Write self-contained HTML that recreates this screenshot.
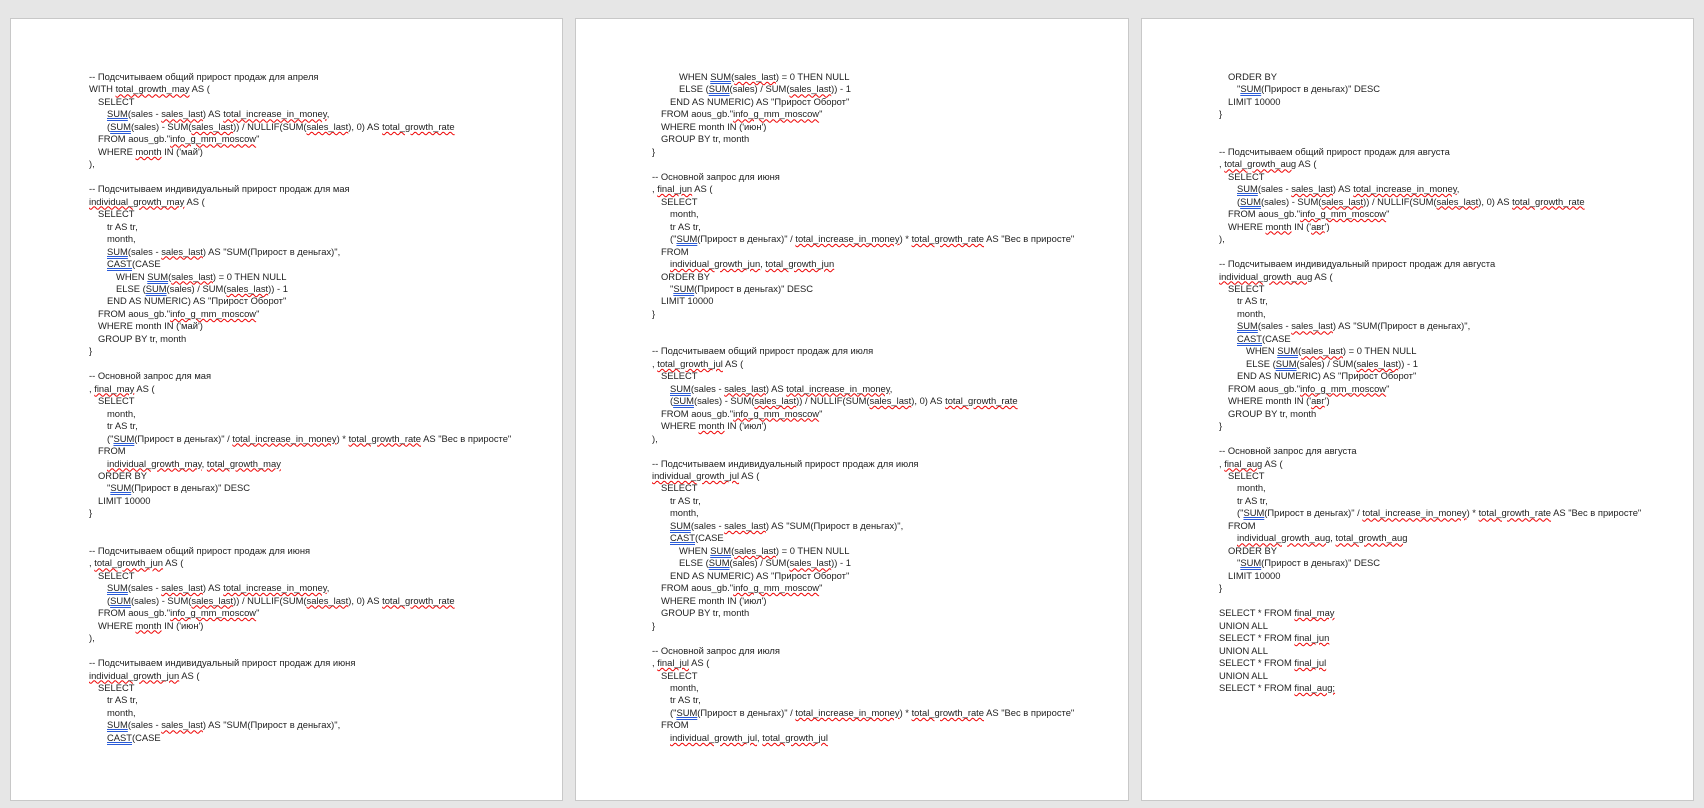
<!DOCTYPE html>
<html><head><meta charset="utf-8"><style>
html,body{margin:0;padding:0;}
body{width:1704px;height:808px;background:#e6e6e6;position:relative;overflow:hidden;font-family:"Liberation Sans","Noto Sans CJK SC",sans-serif;}
.pg{position:absolute;top:18px;height:783px;background:#fff;border:1px solid #c8c8c8;box-sizing:border-box;}
.tx{position:absolute;top:71px;font-size:9.4px;line-height:12.47px;color:#222;white-space:normal;}
.tx div{height:12.47px;white-space:pre;}
.i1{padding-left:9px}.i2{padding-left:18px}.i3{padding-left:27px}
.w{text-decoration:underline wavy #e00;text-decoration-thickness:1px;text-underline-offset:1px}
.b{text-decoration:underline double #2a5bd7;text-underline-offset:1px}
</style></head><body>
<div class="pg" style="left:10px;width:553px"></div>
<div class="pg" style="left:575px;width:554px"></div>
<div class="pg" style="left:1141px;width:553px"></div>

<div class="tx" style="left:89px">
<div>-- Подсчитываем общий прирост продаж для апреля</div>
<div>WITH <span class="w">total_growth_may</span> AS (</div>
<div class="i1">SELECT</div>
<div class="i2"><span class="b">SUM</span>(sales - <span class="w">sales_last</span>) AS <span class="w">total_increase_in_money</span>,</div>
<div class="i2">(<span class="b">SUM</span>(sales) - SUM(<span class="w">sales_last</span>)) / NULLIF(SUM(<span class="w">sales_last</span>), 0) AS <span class="w">total_growth_rate</span></div>
<div class="i1">FROM aous_gb."<span class="w">info_g_mm_moscow</span>"</div>
<div class="i1">WHERE <span class="w">month</span> IN ('май')</div>
<div>),</div>
<div></div>
<div>-- Подсчитываем индивидуальный прирост продаж для мая</div>
<div><span class="w">individual_growth_may</span> AS (</div>
<div class="i1">SELECT</div>
<div class="i2">tr AS tr,</div>
<div class="i2">month,</div>
<div class="i2"><span class="b">SUM</span>(sales - <span class="w">sales_last</span>) AS "SUM(Прирост в деньгах)",</div>
<div class="i2"><span class="b">CAST</span>(CASE</div>
<div class="i3">WHEN <span class="b">SUM</span>(<span class="w">sales_last</span>) = 0 THEN NULL</div>
<div class="i3">ELSE (<span class="b">SUM</span>(sales) / SUM(<span class="w">sales_last</span>)) - 1</div>
<div class="i2">END AS NUMERIC) AS "Прирост Оборот"</div>
<div class="i1">FROM aous_gb."<span class="w">info_g_mm_moscow</span>"</div>
<div class="i1">WHERE month IN ('май')</div>
<div class="i1">GROUP BY tr, month</div>
<div>}</div>
<div></div>
<div>-- Основной запрос для мая</div>
<div>, <span class="w">final_may</span> AS (</div>
<div class="i1">SELECT</div>
<div class="i2">month,</div>
<div class="i2">tr AS tr,</div>
<div class="i2">("<span class="b">SUM</span>(Прирост в деньгах)" / <span class="w">total_increase_in_money</span>) * <span class="w">total_growth_rate</span> AS "Вес в приросте"</div>
<div class="i1">FROM</div>
<div class="i2"><span class="w">individual_growth_may</span>, <span class="w">total_growth_may</span></div>
<div class="i1">ORDER BY</div>
<div class="i2">"<span class="b">SUM</span>(Прирост в деньгах)" DESC</div>
<div class="i1">LIMIT 10000</div>
<div>}</div>
<div></div>
<div></div>
<div>-- Подсчитываем общий прирост продаж для июня</div>
<div>, <span class="w">total_growth_jun</span> AS (</div>
<div class="i1">SELECT</div>
<div class="i2"><span class="b">SUM</span>(sales - <span class="w">sales_last</span>) AS <span class="w">total_increase_in_money</span>,</div>
<div class="i2">(<span class="b">SUM</span>(sales) - SUM(<span class="w">sales_last</span>)) / NULLIF(SUM(<span class="w">sales_last</span>), 0) AS <span class="w">total_growth_rate</span></div>
<div class="i1">FROM aous_gb."<span class="w">info_g_mm_moscow</span>"</div>
<div class="i1">WHERE <span class="w">month</span> IN ('июн')</div>
<div>),</div>
<div></div>
<div>-- Подсчитываем индивидуальный прирост продаж для июня</div>
<div><span class="w">individual_growth_jun</span> AS (</div>
<div class="i1">SELECT</div>
<div class="i2">tr AS tr,</div>
<div class="i2">month,</div>
<div class="i2"><span class="b">SUM</span>(sales - <span class="w">sales_last</span>) AS "SUM(Прирост в деньгах)",</div>
<div class="i2"><span class="b">CAST</span>(CASE</div>
</div>

<div class="tx" style="left:652px">
<div class="i3">WHEN <span class="b">SUM</span>(<span class="w">sales_last</span>) = 0 THEN NULL</div>
<div class="i3">ELSE (<span class="b">SUM</span>(sales) / SUM(<span class="w">sales_last</span>)) - 1</div>
<div class="i2">END AS NUMERIC) AS "Прирост Оборот"</div>
<div class="i1">FROM aous_gb."<span class="w">info_g_mm_moscow</span>"</div>
<div class="i1">WHERE month IN ('июн')</div>
<div class="i1">GROUP BY tr, month</div>
<div>}</div>
<div></div>
<div>-- Основной запрос для июня</div>
<div>, <span class="w">final_jun</span> AS (</div>
<div class="i1">SELECT</div>
<div class="i2">month,</div>
<div class="i2">tr AS tr,</div>
<div class="i2">("<span class="b">SUM</span>(Прирост в деньгах)" / <span class="w">total_increase_in_money</span>) * <span class="w">total_growth_rate</span> AS "Вес в приросте"</div>
<div class="i1">FROM</div>
<div class="i2"><span class="w">individual_growth_jun</span>, <span class="w">total_growth_jun</span></div>
<div class="i1">ORDER BY</div>
<div class="i2">"<span class="b">SUM</span>(Прирост в деньгах)" DESC</div>
<div class="i1">LIMIT 10000</div>
<div>}</div>
<div></div>
<div></div>
<div>-- Подсчитываем общий прирост продаж для июля</div>
<div>, <span class="w">total_growth_jul</span> AS (</div>
<div class="i1">SELECT</div>
<div class="i2"><span class="b">SUM</span>(sales - <span class="w">sales_last</span>) AS <span class="w">total_increase_in_money</span>,</div>
<div class="i2">(<span class="b">SUM</span>(sales) - SUM(<span class="w">sales_last</span>)) / NULLIF(SUM(<span class="w">sales_last</span>), 0) AS <span class="w">total_growth_rate</span></div>
<div class="i1">FROM aous_gb."<span class="w">info_g_mm_moscow</span>"</div>
<div class="i1">WHERE <span class="w">month</span> IN ('июл')</div>
<div>),</div>
<div></div>
<div>-- Подсчитываем индивидуальный прирост продаж для июля</div>
<div><span class="w">individual_growth_jul</span> AS (</div>
<div class="i1">SELECT</div>
<div class="i2">tr AS tr,</div>
<div class="i2">month,</div>
<div class="i2"><span class="b">SUM</span>(sales - <span class="w">sales_last</span>) AS "SUM(Прирост в деньгах)",</div>
<div class="i2"><span class="b">CAST</span>(CASE</div>
<div class="i3">WHEN <span class="b">SUM</span>(<span class="w">sales_last</span>) = 0 THEN NULL</div>
<div class="i3">ELSE (<span class="b">SUM</span>(sales) / SUM(<span class="w">sales_last</span>)) - 1</div>
<div class="i2">END AS NUMERIC) AS "Прирост Оборот"</div>
<div class="i1">FROM aous_gb."<span class="w">info_g_mm_moscow</span>"</div>
<div class="i1">WHERE month IN ('июл')</div>
<div class="i1">GROUP BY tr, month</div>
<div>}</div>
<div></div>
<div>-- Основной запрос для июля</div>
<div>, <span class="w">final_jul</span> AS (</div>
<div class="i1">SELECT</div>
<div class="i2">month,</div>
<div class="i2">tr AS tr,</div>
<div class="i2">("<span class="b">SUM</span>(Прирост в деньгах)" / <span class="w">total_increase_in_money</span>) * <span class="w">total_growth_rate</span> AS "Вес в приросте"</div>
<div class="i1">FROM</div>
<div class="i2"><span class="w">individual_growth_jul</span>, <span class="w">total_growth_jul</span></div>
</div>

<div class="tx" style="left:1219px">
<div class="i1">ORDER BY</div>
<div class="i2">"<span class="b">SUM</span>(Прирост в деньгах)" DESC</div>
<div class="i1">LIMIT 10000</div>
<div>}</div>
<div></div>
<div></div>
<div>-- Подсчитываем общий прирост продаж для августа</div>
<div>, <span class="w">total_growth_aug</span> AS (</div>
<div class="i1">SELECT</div>
<div class="i2"><span class="b">SUM</span>(sales - <span class="w">sales_last</span>) AS <span class="w">total_increase_in_money</span>,</div>
<div class="i2">(<span class="b">SUM</span>(sales) - SUM(<span class="w">sales_last</span>)) / NULLIF(SUM(<span class="w">sales_last</span>), 0) AS <span class="w">total_growth_rate</span></div>
<div class="i1">FROM aous_gb."<span class="w">info_g_mm_moscow</span>"</div>
<div class="i1">WHERE <span class="w">month</span> IN ('<span class="w">авг</span>')</div>
<div>),</div>
<div></div>
<div>-- Подсчитываем индивидуальный прирост продаж для августа</div>
<div><span class="w">individual_growth_aug</span> AS (</div>
<div class="i1">SELECT</div>
<div class="i2">tr AS tr,</div>
<div class="i2">month,</div>
<div class="i2"><span class="b">SUM</span>(sales - <span class="w">sales_last</span>) AS "SUM(Прирост в деньгах)",</div>
<div class="i2"><span class="b">CAST</span>(CASE</div>
<div class="i3">WHEN <span class="b">SUM</span>(<span class="w">sales_last</span>) = 0 THEN NULL</div>
<div class="i3">ELSE (<span class="b">SUM</span>(sales) / SUM(<span class="w">sales_last</span>)) - 1</div>
<div class="i2">END AS NUMERIC) AS "Прирост Оборот"</div>
<div class="i1">FROM aous_gb."<span class="w">info_g_mm_moscow</span>"</div>
<div class="i1">WHERE month IN ('<span class="w">авг</span>')</div>
<div class="i1">GROUP BY tr, month</div>
<div>}</div>
<div></div>
<div>-- Основной запрос для августа</div>
<div>, <span class="w">final_aug</span> AS (</div>
<div class="i1">SELECT</div>
<div class="i2">month,</div>
<div class="i2">tr AS tr,</div>
<div class="i2">("<span class="b">SUM</span>(Прирост в деньгах)" / <span class="w">total_increase_in_money</span>) * <span class="w">total_growth_rate</span> AS "Вес в приросте"</div>
<div class="i1">FROM</div>
<div class="i2"><span class="w">individual_growth_aug</span>, <span class="w">total_growth_aug</span></div>
<div class="i1">ORDER BY</div>
<div class="i2">"<span class="b">SUM</span>(Прирост в деньгах)" DESC</div>
<div class="i1">LIMIT 10000</div>
<div>}</div>
<div></div>
<div>SELECT * FROM <span class="w">final_may</span></div>
<div>UNION ALL</div>
<div>SELECT * FROM <span class="w">final_jun</span></div>
<div>UNION ALL</div>
<div>SELECT * FROM <span class="w">final_jul</span></div>
<div>UNION ALL</div>
<div>SELECT * FROM <span class="w">final_aug;</span></div>
</div>
</body></html>
